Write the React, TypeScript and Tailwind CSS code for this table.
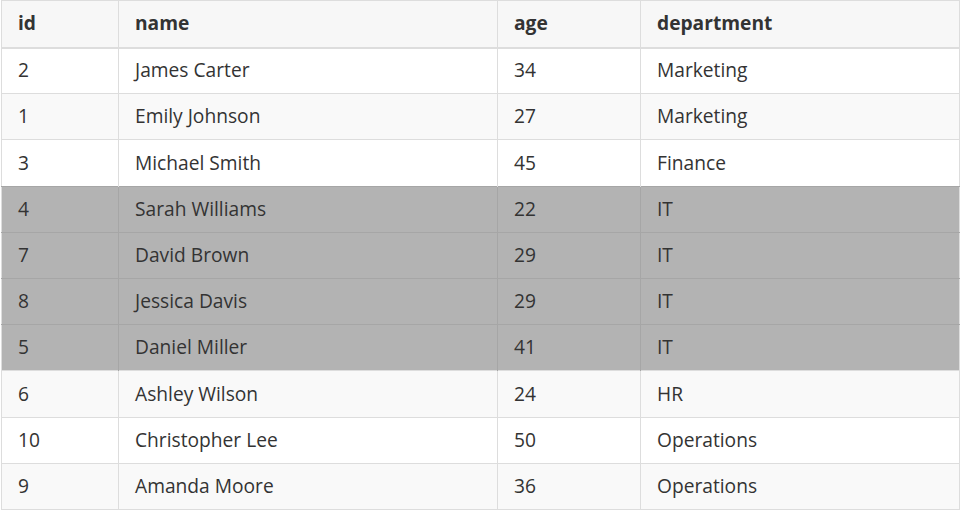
const rows = [
  { id: 2, name: 'James Carter', age: 34, department: 'Marketing', selected: false },
  { id: 1, name: 'Emily Johnson', age: 27, department: 'Marketing', selected: false },
  { id: 3, name: 'Michael Smith', age: 45, department: 'Finance', selected: false },
  { id: 4, name: 'Sarah Williams', age: 22, department: 'IT', selected: true },
  { id: 7, name: 'David Brown', age: 29, department: 'IT', selected: true },
  { id: 8, name: 'Jessica Davis', age: 29, department: 'IT', selected: true },
  { id: 5, name: 'Daniel Miller', age: 41, department: 'IT', selected: true },
  { id: 6, name: 'Ashley Wilson', age: 24, department: 'HR', selected: false },
  { id: 10, name: 'Christopher Lee', age: 50, department: 'Operations', selected: false },
  { id: 9, name: 'Amanda Moore', age: 36, department: 'Operations', selected: false },
]

export default function App() {
  return (
    <div className="bg-white min-h-screen pl-px font-['Open_Sans',sans-serif] text-[19.2px] text-[#333]">
      <table className="w-[959px] border-collapse border border-[#ddd]">
        <thead>
          <tr className="bg-[#f7f7f7] h-[47px] border-b-2 border-[#ddd]">
            <th className="w-[117px] border-r border-[#ddd] px-4 text-left font-bold">id</th>
            <th className="w-[379px] border-r border-[#ddd] px-4 text-left font-bold">name</th>
            <th className="w-[143px] border-r border-[#ddd] px-4 text-left font-bold">age</th>
            <th className="px-4 text-left font-bold">department</th>
          </tr>
        </thead>
        <tbody>
          {rows.map((row, i) => (
            <tr
              key={row.id}
              className={
                row.selected
                  ? 'h-[46.2px] bg-[#b3b3b3] border-t border-[#a6a6a6]'
                  : i % 2 === 0
                    ? 'h-[46.2px] bg-white border-t border-[#ddd]'
                    : 'h-[46.2px] bg-[#f9f9f9] border-t border-[#ddd]'
              }
            >
              <td className={row.selected ? 'border-r border-[#a6a6a6] px-4' : 'border-r border-[#ddd] px-4'}>{row.id}</td>
              <td className={row.selected ? 'border-r border-[#a6a6a6] px-4' : 'border-r border-[#ddd] px-4'}>{row.name}</td>
              <td className={row.selected ? 'border-r border-[#a6a6a6] px-4' : 'border-r border-[#ddd] px-4'}>{row.age}</td>
              <td className="px-4">{row.department}</td>
            </tr>
          ))}
        </tbody>
      </table>
    </div>
  )
}
